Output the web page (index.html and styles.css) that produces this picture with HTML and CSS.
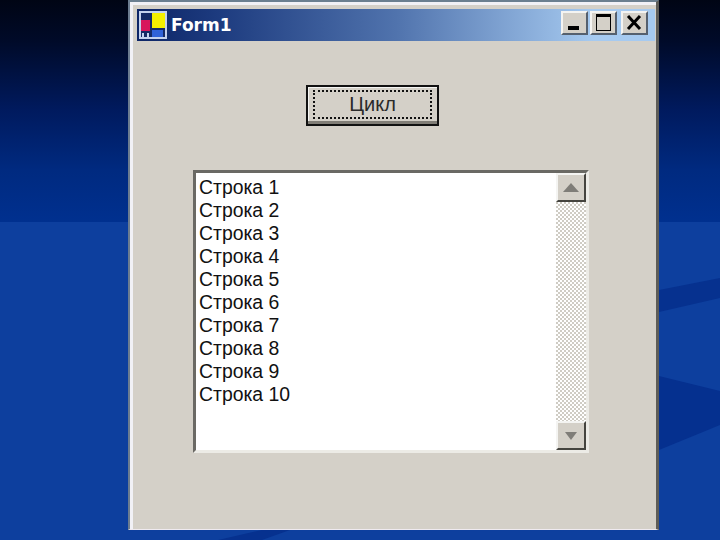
FILE: index.html
```html
<!DOCTYPE html>
<html lang="ru">
<head>
  <meta charset="UTF-8" />
  <title>Form1</title>
  <link rel="stylesheet" href="styles.css">
</head>
<body>
  <!-- slide background streaks -->
  <svg class="streaks" width="720" height="540" viewBox="0 0 720 540" aria-hidden="true">
    <polygon points="659,290 720,278 720,298 659,312" fill="#06318f" />
    <polygon points="659,376 720,391 720,425 659,450" fill="#05308f" />
    <polygon points="218,540 262,530 290,530 262,540" fill="#06318f" />
  </svg>

  <main class="window">
    <header class="titlebar">
      <svg class="app-icon" width="28" height="28" viewBox="0 0 28 28" aria-hidden="true">
        <rect width="28" height="28" fill="#c4d2ee" />
        <rect x="2" y="2" width="24" height="24" fill="#142a66" />
        <rect x="2" y="9" width="9" height="11" fill="#d8165c" />
        <rect x="13" y="2" width="13" height="15" fill="#f5f000" />
        <rect x="13" y="19" width="11" height="7" fill="#2f62d8" />
        <rect x="3" y="22" width="2" height="4" fill="#c4d2ee" />
        <rect x="8" y="22" width="2" height="4" fill="#c4d2ee" />
      </svg>
      <span class="title-text">Form1</span>
      <div class="caption-btns">
        <div class="caption-btn">
          <svg width="27" height="24" viewBox="0 0 27 24" aria-hidden="true"><rect x="7" y="15" width="11" height="4" fill="#000" /></svg>
        </div>
        <div class="caption-btn">
          <svg width="27" height="24" viewBox="0 0 27 24" aria-hidden="true"><rect x="6.5" y="4.5" width="14" height="15" fill="none" stroke="#000" /><rect x="6" y="3" width="15" height="3" fill="#000" /></svg>
        </div>
        <div class="caption-btn caption-close">
          <svg width="27" height="24" viewBox="0 0 27 24" aria-hidden="true"><path d="M7 5l12 13M19 5L7 18" stroke="#000" stroke-width="3" fill="none" /></svg>
        </div>
      </div>
    </header>

    <section class="form-body">
      <button class="cycle-btn"><span class="focus-box">Цикл</span></button>

      <div class="listbox">
        <ul class="items">
          <li>Строка 1</li>
          <li>Строка 2</li>
          <li>Строка 3</li>
          <li>Строка 4</li>
          <li>Строка 5</li>
          <li>Строка 6</li>
          <li>Строка 7</li>
          <li>Строка 8</li>
          <li>Строка 9</li>
          <li>Строка 10</li>
        </ul>
        <div class="scrollbar">
          <div class="scroll-btn">
            <svg width="18" height="12" viewBox="0 0 18 12" aria-hidden="true"><polygon points="9,1 17,10 1,10" fill="#7f7d78" /></svg>
          </div>
          <div class="scroll-track"></div>
          <div class="scroll-btn">
            <svg width="18" height="12" viewBox="0 0 18 12" aria-hidden="true"><polygon points="3,2 15,2 9,10" fill="#7f7d78" /></svg>
          </div>
        </div>
      </div>
    </section>
  </main>
</body>
</html>
```

FILE: styles.css
```css
/* ---------- 1. TOKENS ---------- */
:root{
  --face:#d4d0c8;
  --edge-dark:#45443f;
  --edge-mid:#807d76;
  --edge-light:#f4f4f2;
}

/* ---------- 2. PAGE ---------- */
*,*::before,*::after{box-sizing:border-box;}
html,body{height:100%;}
body{
  margin:0;
  height:540px;
  overflow:hidden;
  position:relative;
  font-family:"Liberation Sans",Arial,sans-serif;
  background:linear-gradient(180deg,#000514 0,#000a28 40px,#001a5e 110px,#002a80 170px,#00308f 222px,#0d3f9e 222px,#0d3f9e 100%);
}
.streaks{position:absolute;left:0;top:0;}

/* ---------- 3. WINDOW ---------- */
.window{
  position:relative;
  width:531px;
  height:530px;
  margin-left:128px;
  padding:7px 4px 0 7px;
  background:var(--face);
  border-top:2px solid #6b7f90;
  border-left:2px solid #6b7c90;
  border-right:3px solid #5d5c58;
  border-bottom:1px solid #efeaf0;
  box-shadow:inset 3px 3px 0 #f1f1f6;
}

.titlebar{
  height:32px;
  margin-right:-3px;
  display:flex;
  align-items:center;
  padding-left:2px;
  background:linear-gradient(90deg,#0d2566 0,#1c3a7e 15%,#5073ad 50%,#a6caf0 88%,#a6caf0 100%);
}
.app-icon{flex:none;}
.title-text{
  margin-left:4px;
  font-family:"DejaVu Sans",sans-serif;
  font-weight:700;
  font-size:17px;
  color:#fff;
}
.caption-btns{
  display:flex;
  gap:2px;
  margin-left:auto;
  margin-right:7px;
  margin-top:-5px;
}
.caption-btn{
  width:27px;
  height:24px;
  background:var(--face);
  border-top:2px solid var(--edge-light);
  border-left:2px solid var(--edge-light);
  border-right:2px solid #55606e;
  border-bottom:2px solid #55606e;
  display:flex;
  align-items:center;
  justify-content:center;
}
.caption-btn svg{flex:none;margin:-2px;}
.caption-close{margin-left:2px;}

/* ---------- 4. FORM BODY ---------- */
.form-body{
  display:flex;
  flex-direction:column;
  align-items:flex-start;
  padding-top:44px;
}

.cycle-btn{
  width:133px;
  height:41px;
  margin-left:169px;
  padding:3px 5px 5px;
  background:var(--face);
  border:2px solid #111;
  box-shadow:inset 0 -3px 0 var(--edge-mid),inset 1px 1px 0 var(--edge-light);
  font:inherit;
}
.focus-box{
  display:flex;
  align-items:center;
  justify-content:center;
  height:100%;
  border:2px dotted #111;
  font-size:20px;
  color:#2a2a2a;
}

.listbox{
  display:flex;
  width:396px;
  height:283px;
  margin-top:44px;
  margin-left:56px;
  background:#fff;
  border-top:3px solid #6a6964;
  border-left:3px solid #6a6964;
  border-right:3px solid #ecebe6;
  border-bottom:3px solid #ecebe6;
}
.items{
  flex:1;
  margin:0;
  padding:3px 0 0 3px;
  list-style:none;
  font-size:19.4px;
  line-height:23px;
  color:#111;
}

/* ---------- 5. SCROLLBAR ---------- */
.scrollbar{
  width:30px;
  display:flex;
  flex-direction:column;
}
.scroll-btn{
  height:29px;
  flex:none;
  display:flex;
  align-items:center;
  justify-content:center;
  background:var(--face);
  border-top:2px solid var(--edge-light);
  border-left:2px solid var(--edge-light);
  border-right:2px solid var(--edge-dark);
  border-bottom:2px solid var(--edge-dark);
}
.scroll-track{
  flex:1;
  background:conic-gradient(#fff 25%,#cfccc4 0 50%,#fff 0 75%,#cfccc4 0) 0 0/4px 4px;
}
```
